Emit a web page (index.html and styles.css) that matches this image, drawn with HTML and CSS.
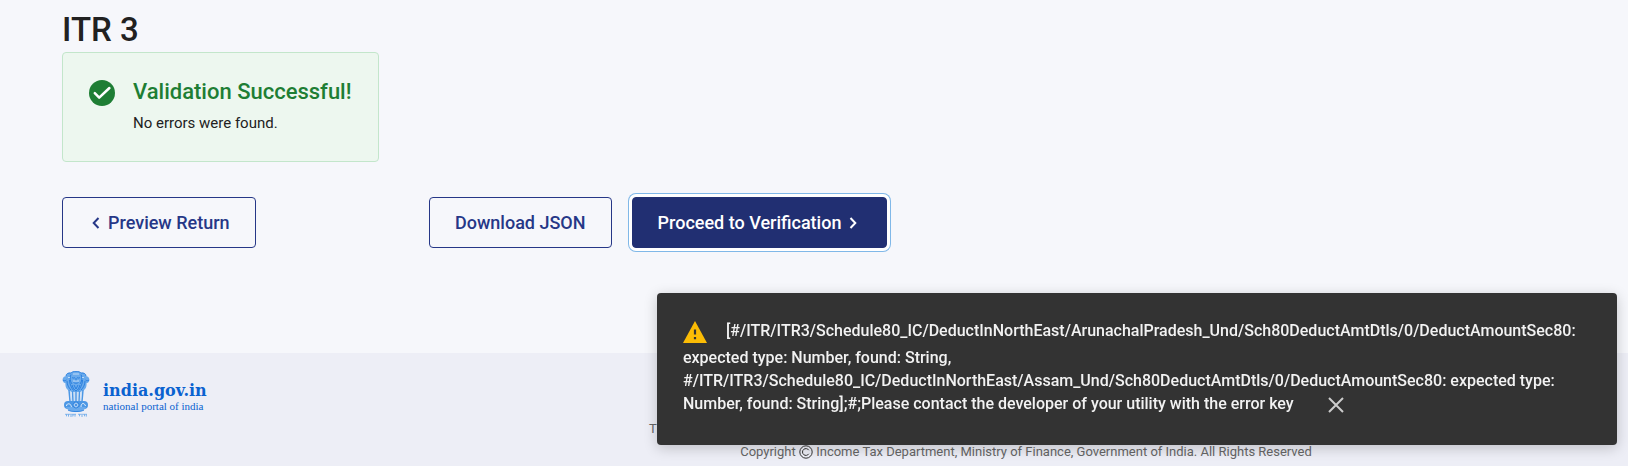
FILE: index.html
```html
<!DOCTYPE html>
<html lang="en">
<head>
    <meta charset="UTF-8">
    <meta name="viewport" content="width=device-width, initial-scale=1.0">
    <title>ITR 3</title>
    <link rel="stylesheet" href="styles.css">
</head>
<body>
    <main class="content">
        <h1>ITR 3</h1>
        <div class="alert-success">
            <svg class="alert-icon" viewBox="0 0 26 26" aria-hidden="true">
                <circle cx="13" cy="13" r="13" fill="#1e7e34"/>
                <path d="M5.8 13.2l4.400 4.400L20.400 8" fill="none" stroke="#fff" stroke-width="2.500" stroke-linecap="round" stroke-linejoin="round"/>
            </svg>
            <div>
                <h2>Validation Successful!</h2>
                <p>No errors were found.</p>
            </div>
        </div>
        <div class="button-row">
            <div class="back-col">
                <button type="button" class="btn btn-outline">
                    <svg class="chevron chevron-left" viewBox="0 0 8 12" aria-hidden="true"><path d="M6.500 1L1.700 6l4.800 5"/></svg>
                    Preview Return
                </button>
            </div>
            <button type="button" class="btn btn-outline">Download JSON</button>
            <button type="button" class="btn btn-primary">
                Proceed to Verification
                <svg class="chevron chevron-right" viewBox="0 0 8 12" aria-hidden="true"><path d="M1.500 1l4.800 5-4.800 5"/></svg>
            </button>
        </div>
    </main>

    <footer class="footer">
        <a class="portal" href="#">
            <svg class="emblem" viewBox="0 0 28 46" aria-hidden="true">
                <!-- lions -->
                <path d="M9 2c2-2.500 8-2.500 10 0 3-.8 5 .8 5 3 2.600.5 4 2.800 3.200 5-.6 1.600-1.800 2-2.700 2.300.4 3-.7 5.700-3 7.200L18 21h-8l-3.500-1.500c-2.300-1.500-3.400-4.200-3-7.200C2.600 12 1.400 11.600.8 10 0 7.800 1.400 5.500 4 5c0-2.200 2-3.800 5-3z" fill="#6aaaec"/>
                <g fill="none" stroke="#1b75db" stroke-width=".8">
                    <path d="M9 2c2-2.300 8-2.300 10 0M4 5c0-2 2-3.500 5-3M24 5c0-2-2-3.500-5-3M1 9c1 1 2.500 1 3.500 0M27 9c-1 1-2.500 1-3.500 0"/>
                    <path d="M10 6.500c1 .7 2 .7 3 0M15 6.500c1 .7 2 .7 3 0M14 7v3M11.500 11.500c1.500 1 3.500 1 5 0M9 3.500c-1.500 3-1 7 1 9.500M19 3.500c1.500 3 1 7-1 9.500"/>
                    <path d="M5 10c0 4 2 7 4 9M23 10c0 4-2 7-4 9M7.500 9c0 4 2 8 4 10.500M20.500 9c0 4-2 8-4 10.500M10 14c1 3 2 5 4 6 2-1 3-3 4-6M12 14l2 4 2-4"/>
                </g>
                <path d="M11 3h6M6 6.500h2M20 6.500h2M11 10h6" stroke="#e4f0fc" stroke-width=".7"/>
                <!-- legs -->
                <path d="M7 19l1 11M10.500 20l.5 10M14 20.500V30M17.500 20l-.5 10M21 19l-1 11" stroke="#4c97e5" stroke-width="1.500"/>
                <path d="M8.500 20l1 10M12.300 21v9M15.700 21v9M19.500 20l-1 10" stroke="#b5d4f5" stroke-width=".7"/>
                <!-- abacus with the wheel -->
                <rect x="2" y="30" width="24" height="8" rx="4" fill="#4c97e5"/>
                <path d="M4 36c2 4 5 5 10 5s8-1 10-5z" fill="#6aaaec"/>
                <circle cx="14" cy="34" r="3" fill="#d5e7fa" stroke="#1b75db" stroke-width=".8"/>
                <path d="M14 31v6M11 34h6M12 32l4 4M16 32l-4 4" stroke="#1b75db" stroke-width=".5"/>
                <path d="M4.500 35c0-2 1.500-2.500 3-2s1.500 2 2 3M19 36c0-2 .8-3.500 2-3.500s2 1 2.500 2.500" fill="none" stroke="#e4f0fc" stroke-width="1"/>
                <path d="M6 39.300c4 1.700 12 1.700 16 0" fill="none" stroke="#1b75db" stroke-width=".7"/>
                <!-- motto -->
                <path d="M3 43.300h11M16 43.300h9" stroke="#5ca1e8" stroke-width=".7"/>
                <path d="M4.500 43.300v2M6.500 43.300v2.300M8 45h2.500M11 43.300v2M13 43.300v2.300M17.500 43.300v2M19 45h2M22.500 43.300v2M24.300 43.300v2.300" stroke="#5ca1e8" stroke-width=".8"/>
            </svg>
            <span class="portal-text">
                <strong>india.gov.in</strong>
                <small>national portal of india</small>
            </span>
        </a>
        <div class="footer-text">
            <p>This site is best viewed in 1024 * 768 resolution with latest versions of Google Chrome, Mozilla Firefox, Safari and Internet Explorer.</p>
            <p>Copyright <svg class="copyright" viewBox="0 0 14 14" role="img" aria-label="(c)"><circle cx="7" cy="7" r="6.200"/><path d="M9.800 5.200a3.400 3.400 0 1 0 0 3.600"/></svg> Income Tax Department, Ministry of Finance, Government of India. All Rights Reserved</p>
        </div>
    </footer>

    <div class="snackbar" role="alert">
        <svg class="warning" viewBox="0 0 24 22" aria-hidden="true">
            <path d="M12 0l12 22H0z" fill="#fbbc05"/>
            <path d="M12 8.500v5M12 16v2.300" stroke="#333" stroke-width="2.200"/>
        </svg>
        [#/ITR/ITR3/Schedule80_IC/DeductInNorthEast/ArunachalPradesh_Und/Sch80DeductAmtDtls/0/DeductAmountSec80: expected type: Number, found: String, #/ITR/ITR3/Schedule80_IC/DeductInNorthEast/Assam_Und/Sch80DeductAmtDtls/0/DeductAmountSec80: expected type: Number, found: String];#;Please contact the developer of your utility with the error key
        <button type="button" class="close" aria-label="Close">
            <svg viewBox="0 0 16 16" aria-hidden="true"><path d="M1 1l14 14M15 1L1 15"/></svg>
        </button>
    </div>
</body>
</html>
```

FILE: styles.css
```css
* {
    box-sizing: border-box;
}
body {
    margin: 0;
    min-height: 100vh;
    display: flex;
    flex-direction: column;
    font-family: Roboto, "Liberation Sans", sans-serif;
    background: #f6f7fb;
    color: #212121;
}
h1, h2, p {
    margin: 0;
    font-weight: 500;
}
h1 {
    font-size: 33px;
    line-height: 40px;
}
.content {
    padding: 10px 62px 105px;
    display: flex;
    flex-direction: column;
    align-items: flex-start;
    gap: 2px;
}
.alert-success {
    display: flex;
    gap: 18px;
    padding: 25px 26px;
    background: #edf7ef;
    border: 1px solid #c3e6cb;
    border-radius: 4px;
}
.alert-icon {
    width: 26px;
    height: 26px;
    margin-top: 2px;
}
.alert-success h2 {
    font-size: 22px;
    line-height: 28px;
    color: #1e7e34;
}
.alert-success p {
    margin-top: 5px;
    font-size: 15px;
    line-height: 25px;
    font-weight: 400;
}
.button-row {
    display: flex;
    margin-top: 33px;
}
.back-col {
    width: 367px;
}
.btn {
    display: inline-flex;
    align-items: center;
    gap: 8px;
    padding: 14px 25px;
    border: 1px solid #263787;
    border-radius: 4px;
    font-family: inherit;
    font-size: 18px;
    line-height: 21px;
    font-weight: 500;
    cursor: pointer;
}
.btn-outline {
    background: transparent;
    color: #263787;
}
.btn-primary {
    margin-left: 20px;
    background: #212f72;
    border-color: #212f72;
    color: #fff;
    box-shadow: 0 0 0 3px #fff, 0 0 0 4px #80b8e8;
}
.chevron {
    width: 8px;
    height: 12px;
    fill: none;
    stroke: currentColor;
    stroke-width: 2;
}
.chevron-left {
    margin-left: 4px;
}
.chevron-right {
    margin-right: 4px;
}
.footer {
    flex: 1;
    display: flex;
    padding: 18px 0 0 62px;
    background: #edeef6;
}
.portal {
    width: 362px;
    display: flex;
    align-items: flex-start;
    gap: 13px;
    color: #0a62d0;
    text-decoration: none;
}
.emblem {
    width: 28px;
    height: 46px;
}
.portal-text {
    display: flex;
    flex-direction: column;
    padding-top: 11px;
    font-family: "DejaVu Serif", serif;
}
.portal-text strong {
    font-size: 16px;
    line-height: 18px;
}
.portal-text small {
    font-family: "Liberation Serif", serif;
    font-size: 11px;
    line-height: 12px;
}
.footer-text {
    flex: 1;
    padding-top: 46px;
    font-size: 13px;
    line-height: 23px;
    text-align: center;
    color: #666;
}
.footer-text p {
    font-weight: 400;
}
.copyright {
    width: 14px;
    height: 14px;
    vertical-align: -3px;
    fill: none;
    stroke: #333;
}
.snackbar {
    position: fixed;
    right: 11px;
    bottom: 21px;
    width: 960px;
    max-width: calc(100vw - 22px);
    padding: 26px 26px 30px;
    border-radius: 4px;
    background: #333;
    color: #f2f2f2;
    font-size: 16px;
    line-height: 23px;
    font-weight: 500;
    box-shadow: 0 3px 14px rgba(0, 0, 0, 0.2);
}
.warning {
    width: 24px;
    height: 22px;
    margin-right: 15px;
    margin-bottom: 3px;
    vertical-align: -10px;
}
.close {
    margin-left: 30px;
    padding: 0;
    border: 0;
    background: none;
    vertical-align: -4px;
    line-height: 0;
    cursor: pointer;
}
.close svg {
    width: 16px;
    height: 16px;
    fill: none;
    stroke: #ccc;
    stroke-width: 2;
}
```
